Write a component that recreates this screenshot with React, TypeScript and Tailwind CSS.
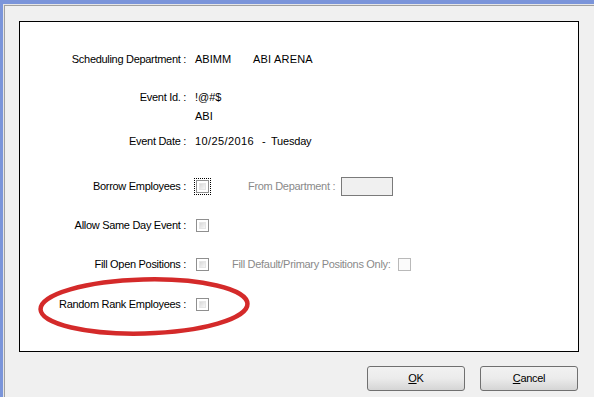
import React from "react";

function Check({ disabled = false, focus = false }: { disabled?: boolean; focus?: boolean }) {
  const box = disabled ? (
    <div className="w-[13px] h-[13px] border border-[#b9b9b9] bg-[#fbfbfb]" />
  ) : (
    <div className="w-[13px] h-[13px] border border-[#8f8f8f] bg-white p-[2px]">
      <div className="w-full h-full bg-gradient-to-br from-[#d9d9d9] to-[#f7f7f7] border border-[#e6e6e6]" />
    </div>
  );
  if (focus) {
    return <div className="p-px border border-dotted border-black">{box}</div>;
  }
  return box;
}

function Label({ children }: { children: React.ReactNode }) {
  return <div className="w-[166px] text-right whitespace-pre">{children}</div>;
}

export default function App() {
  return (
    <div
      className="w-[594px] h-[397px] bg-[#7b95da] pt-[4px] pl-[3px] overflow-hidden text-[11px] tracking-[-0.3px] text-black"
      style={{ fontFamily: "Tahoma, 'Liberation Sans', 'DejaVu Sans', sans-serif" }}
    >
      <div className="h-full border-t border-l border-[#e6e6e6]">
        <div className="h-full border-t border-l border-[#a0a0a0] bg-[#f0f0f0] pl-[14px] pt-[15px]">
          <div className="w-[560px] h-[331px] border border-black bg-white relative">
            <div className="flex items-center h-[19px] mt-[28px]">
              <Label>Scheduling Department :</Label>
              <div className="ml-[9px] w-[58px] tracking-[0px]">ABIMM</div>
              <div className="tracking-[0.2px]">ABI ARENA</div>
            </div>
            <div className="flex items-center h-[19px] mt-[19px]">
              <Label>Event Id. :</Label>
              <div className="ml-[9px] tracking-[0px]">!@#$</div>
            </div>
            <div className="flex items-center h-[19px]">
              <div className="ml-[175px] tracking-[0px]">ABI</div>
            </div>
            <div className="flex items-center h-[19px] mt-[6px]">
              <Label>Event Date :</Label>
              <div className="ml-[9px] w-[67px] tracking-[0.4px] whitespace-nowrap">10/25/2016</div>
              <div className="w-[9px]">-</div>
              <div className="tracking-[-0.2px]">Tuesday</div>
            </div>
            <div className="flex items-center h-[19px] mt-[26px]">
              <Label>Borrow Employees :</Label>
              <div className="ml-[8px] -mr-[2px]">
                <Check focus />
              </div>
              <div className="ml-[39px] text-[#8a8a8a] w-[93px] whitespace-nowrap">From Department :</div>
              <div className="w-[52px] h-[19px] border border-[#7a7a7a] bg-[#f0f0f0]" />
            </div>
            <div className="flex items-center h-[19px] mt-[20px]">
              <Label>Allow Same Day Event :</Label>
              <div className="ml-[10px]">
                <Check />
              </div>
            </div>
            <div className="flex items-center h-[19px] mt-[20px]">
              <Label>Fill Open Positions :</Label>
              <div className="ml-[10px]">
                <Check />
              </div>
              <div className="ml-[23px] text-[#8a8a8a] w-[166px] whitespace-nowrap">Fill Default/Primary Positions Only:</div>
              <Check disabled />
            </div>
            <div className="flex items-center h-[19px] mt-[21px]">
              <Label>Random Rank Employees :</Label>
              <div className="ml-[10px]">
                <Check />
              </div>
            </div>
            <svg
              className="absolute left-[10px] top-[249px] pointer-events-none"
              width="240"
              height="80"
              viewBox="0 0 240 80"
            >
              <ellipse
                cx="114"
                cy="35.5"
                rx="103.5"
                ry="27"
                fill="none"
                stroke="#d42a2a"
                strokeWidth="4.5"
                transform="rotate(-1.5 114 35.5)"
              />
            </svg>
          </div>
          <div className="flex mt-[14px] ml-[348px] gap-[15px]">
            <button className="w-[98px] h-[25px] rounded-[3px] border border-[#707070] bg-gradient-to-b from-[#f2f2f2] via-[#ebebeb] to-[#d5d5d5] flex items-center justify-center">
              <span>
                <span className="underline">O</span>K
              </span>
            </button>
            <button className="w-[98px] h-[25px] rounded-[3px] border border-[#707070] bg-gradient-to-b from-[#f2f2f2] via-[#ebebeb] to-[#d5d5d5] flex items-center justify-center">
              <span>
                <span className="underline">C</span>ancel
              </span>
            </button>
          </div>
        </div>
      </div>
    </div>
  );
}
